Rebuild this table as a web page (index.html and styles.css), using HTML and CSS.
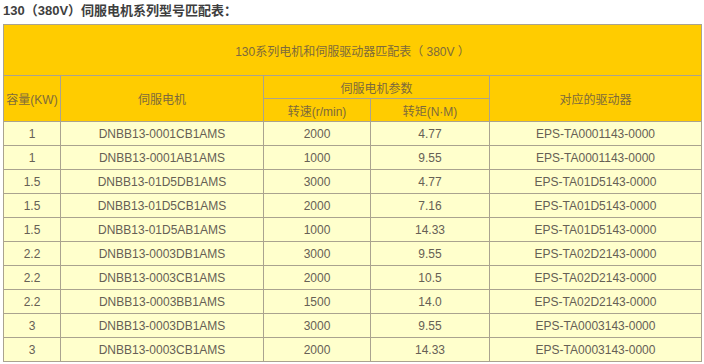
FILE: index.html
```html
<!DOCTYPE html>
<html lang="zh-CN">
<head>
<meta charset="utf-8">
<title>130伺服电机系列型号匹配表</title>
<link rel="stylesheet" href="styles.css">
</head>
<body>
<div class="page">
  <h3 class="heading">130（380V）伺服电机系列型号匹配表：</h3>
  <table class="spec">
    <colgroup>
      <col class="c1"><col class="c2"><col class="c3"><col class="c4"><col class="c5">
    </colgroup>
    <tr class="title-row"><td colspan="5">130系列电机和伺服驱动器匹配表（ 380V ）</td></tr>
    <tr class="head-row">
      <td rowspan="2">容量(KW)</td>
      <td rowspan="2">伺服电机</td>
      <td colspan="2">伺服电机参数</td>
      <td rowspan="2">对应的驱动器</td>
    </tr>
    <tr class="head-row"><td>转速(r/min)</td><td>转矩(N·M)</td></tr>
    <tr class="data-row"><td>1</td><td>DNBB13-0001CB1AMS</td><td>2000</td><td>4.77</td><td>EPS-TA0001143-0000</td></tr>
    <tr class="data-row"><td>1</td><td>DNBB13-0001AB1AMS</td><td>1000</td><td>9.55</td><td>EPS-TA0001143-0000</td></tr>
    <tr class="data-row"><td>1.5</td><td>DNBB13-01D5DB1AMS</td><td>3000</td><td>4.77</td><td>EPS-TA01D5143-0000</td></tr>
    <tr class="data-row"><td>1.5</td><td>DNBB13-01D5CB1AMS</td><td>2000</td><td>7.16</td><td>EPS-TA01D5143-0000</td></tr>
    <tr class="data-row"><td>1.5</td><td>DNBB13-01D5AB1AMS</td><td>1000</td><td>14.33</td><td>EPS-TA01D5143-0000</td></tr>
    <tr class="data-row"><td>2.2</td><td>DNBB13-0003DB1AMS</td><td>3000</td><td>9.55</td><td>EPS-TA02D2143-0000</td></tr>
    <tr class="data-row"><td>2.2</td><td>DNBB13-0003CB1AMS</td><td>2000</td><td>10.5</td><td>EPS-TA02D2143-0000</td></tr>
    <tr class="data-row"><td>2.2</td><td>DNBB13-0003BB1AMS</td><td>1500</td><td>14.0</td><td>EPS-TA02D2143-0000</td></tr>
    <tr class="data-row"><td>3</td><td>DNBB13-0003DB1AMS</td><td>3000</td><td>9.55</td><td>EPS-TA0003143-0000</td></tr>
    <tr class="data-row"><td>3</td><td>DNBB13-0003CB1AMS</td><td>2000</td><td>14.33</td><td>EPS-TA0003143-0000</td></tr>
  </table>
</div>
</body>
</html>
```
FILE: styles.css
```css
html, body {
  margin: 0;
  padding: 0;
  background: #ffffff;
}
.page {
  padding: 4px 3px 0 3px;
  font-family: "Liberation Sans", "Noto Sans CJK SC", sans-serif;
}
.heading {
  margin: 0 0 6px 0;
  font-size: 13px;
  line-height: 14px;
  font-weight: bold;
  color: #3e3e3e;
  font-family: "Liberation Sans", "Noto Sans CJK SC", sans-serif;
}
.spec {
  border-collapse: collapse;
  table-layout: fixed;
  width: 698px;
  font-size: 12px;
  color: #666055;
}
.c1 { width: 57px; }
.c2 { width: 203px; }
.c3 { width: 107px; }
.c4 { width: 119px; }
.c5 { width: 212px; }
.spec td {
  border: 1px solid #aaa38f;
  padding: 0;
  text-align: center;
  vertical-align: middle;
  white-space: nowrap;
}
.title-row td {
  height: 50px;
  background: #ffcc00;
  color: #7d6a3c;
  font-size: 12px;
}
.head-row td {
  height: 22px;
  background: #ffcc00;
  color: #7d6a3c;
  font-size: 12px;
}
.data-row td {
  height: 23px;
  background: #ffffcc;
}
```
